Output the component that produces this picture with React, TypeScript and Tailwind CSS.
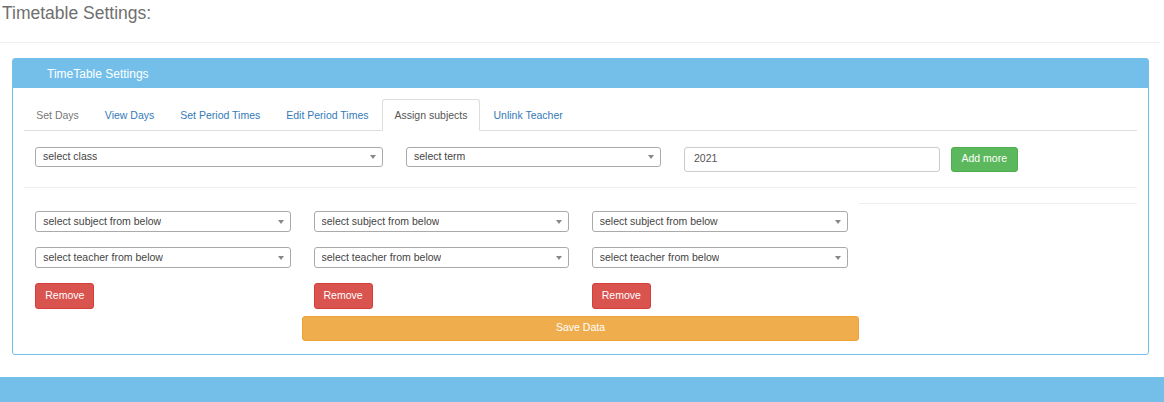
import React from 'react';

const tabs = [
  { label: 'Set Days', color: 'text-[#777]' },
  { label: 'View Days', color: 'text-[#337ab7]' },
  { label: 'Set Period Times', color: 'text-[#337ab7]' },
  { label: 'Edit Period Times', color: 'text-[#337ab7]' },
  { label: 'Assign subjects', color: 'text-[#555]', active: true },
  { label: 'Unlink Teacher', color: 'text-[#337ab7]' },
];

const Select: React.FC<{ text: string; className?: string }> = ({ text, className = '' }) => (
  <div
    className={`h-[20.5px] border border-[#aaa] rounded-[3px] bg-white flex items-center justify-between pl-[7px] pr-[6px] pt-[1px] text-[10.5px] text-[#444] ${className}`}
  >
    <span className="truncate">{text}</span>
    <span className="w-0 h-0 border-l-[3px] border-r-[3px] border-t-[4px] border-l-transparent border-r-transparent border-t-[#888]" />
  </div>
);

const SubjectColumn = () => (
  <div className="px-[11.25px] pt-[23px] flex flex-col items-start">
    <Select text="select subject from below" className="w-full" />
    <Select text="select teacher from below" className="w-full mt-[15.5px]" />
    <button className="block mt-[15.5px] h-[25.5px] px-[9px] rounded-[3px] bg-[#d9534f] border border-[#d43f3a] text-white text-[10.5px]">
      Remove
    </button>
  </div>
);

const App = () => {
  return (
    <div className="w-[1164px] bg-white font-['Liberation_Sans',Arial,sans-serif]">
      <div className="w-[1160px]">
        {/* page title */}
        <div className="pt-[3px] pb-[19px] pl-[2px] border-b border-[#eee]">
          <h3 className="text-[17.5px] leading-[20px] text-[#6f6f6f] font-normal">Timetable Settings:</h3>
        </div>

        {/* panel */}
        <div className="mt-[15px] ml-[12px] mr-[11px] border border-[#73bfea] rounded-[3px]">
          <div className="h-[29px] bg-[#73bfea] flex items-center pl-[34px] text-white text-[12px]">
            TimeTable Settings
          </div>

          <div className="p-[11px] pb-[12.5px]">
            {/* tabs */}
            <ul className="flex border-b border-[#ddd] text-[10.5px]">
              {tabs.map((t) => (
                <li key={t.label} className="-mb-px mr-[1.5px]">
                  <a
                    className={`block px-[11.25px] py-[7.5px] leading-[15px] border rounded-t-[3px] ${t.color} ${
                      t.active ? 'bg-white border-[#ddd] border-b-transparent' : 'border-transparent'
                    }`}
                  >
                    {t.label}
                  </a>
                </li>
              ))}
            </ul>

            {/* class / term / year row */}
            <div className="mt-[15.5px] pl-[11px] flex items-start">
              <Select text="select class" className="w-[348px]" />
              <Select text="select term" className="w-[255px] ml-[23px]" />
              <div className="w-[256px] ml-[23px] h-[25px] border border-[#ccc] rounded-[3px] flex items-center pl-[9px] text-[10.5px] text-[#555]">
                2021
              </div>
              <button className="block ml-[11px] h-[25.5px] px-[9.5px] rounded-[3px] bg-[#5cb85c] border border-[#4cae4c] text-white text-[10.5px]">
                Add more
              </button>
            </div>

            <div className="mt-[15px] border-t border-[#eee]" />

            {/* subject / teacher grid */}
            <div className="grid grid-cols-4">
              <SubjectColumn />
              <SubjectColumn />
              <SubjectColumn />
              <div className="mt-[15px] border-t border-[#eee] self-start" />
              <button className="block col-start-2 col-span-2 mt-[7px] w-full h-[25.5px] rounded-[3px] bg-[#f0ad4e] border border-[#eea236] text-white text-[10.5px]">
                Save Data
              </button>
            </div>
          </div>
        </div>
      </div>

      {/* bottom bar */}
      <div className="mt-[22px] h-[26px] bg-[#73bfea]" />
    </div>
  );
};

export default App;
